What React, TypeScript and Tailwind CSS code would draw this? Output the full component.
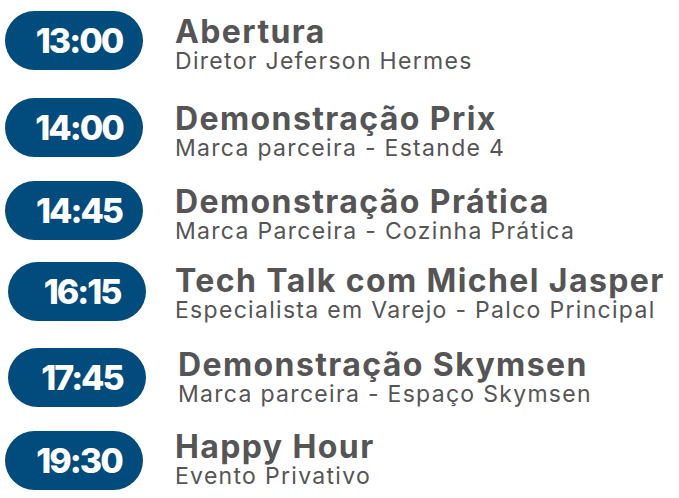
import React from "react";

type Item = {
  time: string;
  title: string;
  sub: string;
  rowClass: string;
  textClass: string;
};

const items: Item[] = [
  { time: "13:00", title: "Abertura", sub: "Diretor Jeferson Hermes", rowClass: "mt-[11px] ml-[5px]", textClass: "ml-[32px] pt-[5px]" },
  { time: "14:00", title: "Demonstração Prix", sub: "Marca parceira - Estande 4", rowClass: "mt-[28px] ml-[5px]", textClass: "ml-[32px] pt-[5px]" },
  { time: "14:45", title: "Demonstração Prática", sub: "Marca Parceira - Cozinha Prática", rowClass: "mt-[24px] ml-[5px]", textClass: "ml-[32px] pt-[5px]" },
  { time: "16:15", title: "Tech Talk com Michel Jasper", sub: "Especialista em Varejo - Palco Principal", rowClass: "mt-[22px] ml-[8px]", textClass: "ml-[29px] pt-[3px]" },
  { time: "17:45", title: "Demonstração Skymsen", sub: "Marca parceira - Espaço Skymsen", rowClass: "mt-[27px] ml-[8px]", textClass: "ml-[32px] pt-[1px]" },
  { time: "19:30", title: "Happy Hour", sub: "Evento Privativo", rowClass: "mt-[24px] ml-[5px]", textClass: "ml-[32px] pt-0" },
];

export default function App() {
  return (
    <div className="w-[679px] h-[498px] bg-white overflow-hidden font-['Inter',sans-serif] text-[#555555]">
      {items.map((it) => (
        <div key={it.time} className={`flex items-start h-[59px] ${it.rowClass}`}>
          <div className="w-[138px] h-[59px] shrink-0 rounded-[30px] bg-[#024b7d] flex items-center justify-center pl-[10px]">
            <span className="text-white text-[34px] font-extrabold tracking-[-2px] leading-none">{it.time}</span>
          </div>
          <div className={`flex flex-col ${it.textClass}`}>
            <div className="text-[32px] font-bold leading-[32px] whitespace-nowrap tracking-[1.4px]">{it.title}</div>
            <div className="text-[23px] font-normal leading-[27px] whitespace-nowrap tracking-[1.3px]">{it.sub}</div>
          </div>
        </div>
      ))}
    </div>
  );
}
